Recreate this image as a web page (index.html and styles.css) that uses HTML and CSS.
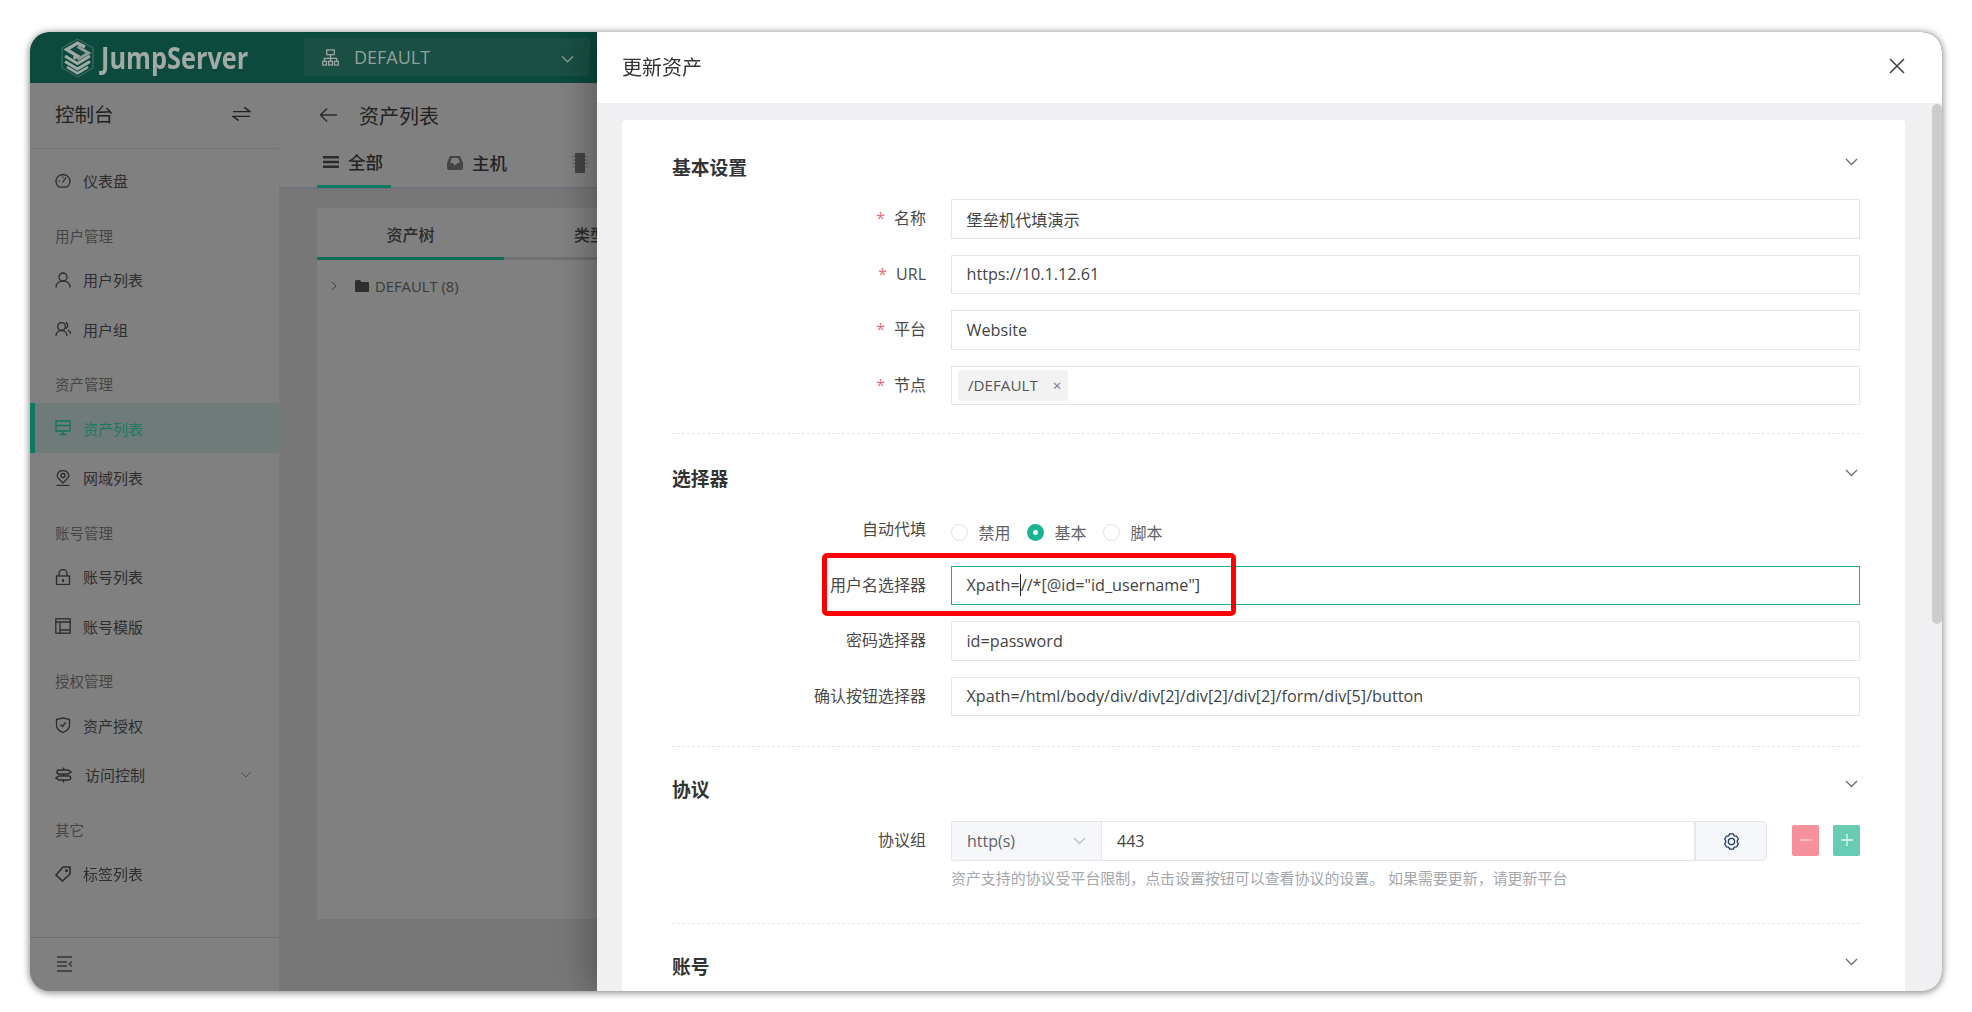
FILE: index.html
```html
<!DOCTYPE html>
<html lang="zh-CN">
<head>
<meta charset="utf-8">
<title>JumpServer 更新资产</title>
<link rel="stylesheet" href="styles.css">
</head>
<body>
<div class="window">
  <header class="topbar">
    <div class="logo">
      <svg class="logo-mark" viewBox="0 0 33 40" fill="none" stroke="#a2aaa6">
        <path d="M16.500 1 32 10v20L16.500 39 1 30V10z" stroke-width=".8" stroke="#5d7f76"/>
        <path d="M24 9 16.500 5 5.500 11.500 16.500 18l-4 2.300" stroke-width="3.200"/>
        <path d="M16.500 8.500l11 6.500-11 6.500" stroke-width="3" stroke="#a2aaa6" opacity=".85"/>
        <path d="M4 18l12.500 7.500L29 18" stroke-width="3"/>
        <path d="M4 23.500l12.500 7.500L29 23.500" stroke-width="3"/>
        <path d="M6 29l10.500 6.300L27 29" stroke-width="2.600"/>
      </svg>
      <span class="logo-text">JumpServer</span>
    </div>
    <div class="org">
      <svg class="org-icon" viewBox="0 0 18 18" fill="none" stroke="#a2aaa6" stroke-width="1.300">
        <rect x="5" y="1" width="8" height="5"/><path d="M9 6v4M2.500 13V10h13v3M9 10v3"/>
        <rect x=".8" y="13" width="4" height="4"/><rect x="7" y="13" width="4" height="4"/><rect x="13.200" y="13" width="4" height="4"/>
      </svg>
      <span class="org-name">DEFAULT</span>
      <svg class="org-chev" viewBox="0 0 14 8" fill="none" stroke="#8f9b97" stroke-width="1.300"><path d="M1 1l6 6 6-6"/></svg>
    </div>
  </header>
  <div class="app">
    <aside class="sidebar">
      <div class="side-head">
        <span class="side-title">控制台</span>
        <svg class="swap" viewBox="0 0 20 16" fill="none" stroke="#222" stroke-width="1.500"><path d="M1 5.500h18L13 1M19 10.500H1l6 4.500"/></svg>
      </div>
      <nav class="nav">
        <a class="item"><svg class="ico" viewBox="0 0 16 16" fill="none" stroke="#2c2c2c" stroke-width="1.300"><path d="M4.500 14.200a7 6.800 0 1 1 7 0z"/><path d="M7.500 9.500l3.500-5M3.500 8h1.200M8 3.500v1.200"/></svg>仪表盘</a>
        <div class="group">用户管理</div>
        <a class="item"><svg class="ico" viewBox="0 0 16 16" fill="none" stroke="#2c2c2c" stroke-width="1.300"><circle cx="8" cy="5" r="4"/><path d="M1 15.500c0-4 3-6.500 7-6.500s7 2.500 7 6.500"/></svg>用户列表</a>
        <a class="item"><svg class="ico" viewBox="0 0 16 16" fill="none" stroke="#2c2c2c" stroke-width="1.300"><circle cx="6.500" cy="5.500" r="3.800"/><path d="M1 15c0-3.500 2.500-5.500 5.500-5.500S12 11.500 12 15M10.500 1.500c2.500.5 3 4.500.5 6M13 9c1.500 1 2.500 2.500 2.500 4"/></svg>用户组</a>
        <div class="group">资产管理</div>
        <a class="item item-active"><svg class="ico" viewBox="0 0 16 16" fill="none" stroke="#11755f" stroke-width="1.300"><path d="M1 1h14v10H1zM1 5.500h14M8 11v3.500M4.500 14.500h7"/></svg>资产列表</a>
        <a class="item"><svg class="ico" viewBox="0 0 16 16" fill="none" stroke="#2c2c2c" stroke-width="1.300"><path d="M8 13C5 10 2.200 8 2.200 5.500a5.800 5 0 0 1 11.600 0C13.800 8 11 10 8 13z"/><circle cx="8" cy="5.500" r="2"/><path d="M1.500 15.500h13"/></svg>网域列表</a>
        <div class="group">账号管理</div>
        <a class="item"><svg class="ico" viewBox="0 0 16 16" fill="none" stroke="#2c2c2c" stroke-width="1.300"><rect x="1.500" y="7" width="13" height="8.500"/><path d="M4 7V4.500a4 4 0 0 1 8 0V7"/><path d="M8 10v3" stroke-width="1.800"/></svg>账号列表</a>
        <a class="item"><svg class="ico" viewBox="0 0 16 16" fill="none" stroke="#2c2c2c" stroke-width="1.300"><rect x=".8" y=".8" width="14.400" height="14.400"/><path d="M.8 4h14.400M5 4v11.200M5 12h10"/></svg>账号模版</a>
        <div class="group">授权管理</div>
        <a class="item"><svg class="ico" viewBox="0 0 16 16" fill="none" stroke="#2c2c2c" stroke-width="1.300"><path d="M1.500 2.500L8 .8l6.500 1.700v6c0 3.500-3 5.500-6.500 7-3.500-1.500-6.500-3.500-6.500-7z"/><path d="M5.500 7.500L7.500 9.500l3-4"/></svg>资产授权</a>
        <a class="item item-sub"><svg class="ico ico-sub" viewBox="0 0 17 16" fill="none" stroke="#2c2c2c" stroke-width="1.500"><path d="M8.500 .5V3M8.500 7v2M8.500 13v2.500M3 3h10l3 2-3 2H4a2 2 0 0 1 0-4zM14 9H4l-3 2 3 2h9.500a2 2 0 0 0 .5-4z"/></svg>访问控制<svg class="sub-chev" viewBox="0 0 12 7" fill="none" stroke="#4f4f4f" stroke-width="1"><path d="M1 1l5 5 5-5"/></svg></a>
        <div class="group">其它</div>
        <a class="item"><svg class="ico" viewBox="0 0 16 16" fill="none" stroke="#2c2c2c" stroke-width="1.600"><path d="M1 9l7-8h7v7l-7.500 7z"/><circle cx="11.500" cy="4.500" r=".8"/></svg>标签列表</a>
      </nav>
      <div class="side-foot">
        <svg class="collapse" viewBox="0 0 17 16" fill="none" stroke="#343438" stroke-width="1.300"><path d="M1 1h15M1 6h10M1 10h10M1 15h15M16 5.500l-3 2.500 3 2.500"/></svg>
      </div>
    </aside>
    <main class="main">
      <div class="page-head">
        <div class="page-title-row">
          <svg class="back" viewBox="0 0 18 16" fill="none" stroke="#2b2b2b" stroke-width="1.500"><path d="M18 8H1.500M8 1.500L1.500 8 8 14.500"/></svg>
          <h1 class="page-title">资产列表</h1>
        </div>
        <div class="tabs">
          <a class="tab tab-active"><svg class="tab-ico" viewBox="0 0 16 14" fill="#2b2b2b"><path d="M0 1h16v2.400H0zM0 5.800h16v2.400H0zM0 10.600h16V13H0z"/></svg>全部</a>
          <a class="tab tab-host"><svg class="tab-ico" viewBox="0 0 16 14" fill="#444"><path d="M3 0h10l3 7v5a2 2 0 0 1-2 2H2a2 2 0 0 1-2-2V7zM3 7h3l1 2h2l1-2h3l-1.800-5H4.800z"/></svg>主机</a>
          <a class="tab tab-chip"><svg class="tab-ico" viewBox="0 0 16 20" fill="#444"><rect x="3" y="0" width="10" height="20" rx="1"/><path d="M0 3h3v1H0zM0 6.500h3v1H0zM0 10h3v1H0zM0 13.500h3v1H0zM13 3h3v1h-3zM13 6.500h3v1h-3zM13 10h3v1h-3zM13 13.500h3v1h-3z" opacity=".6"/></svg></a>
        </div>
      </div>
      <section class="tree-card">
        <div class="tree-tabs">
          <span class="tree-tab tree-tab-active">资产树</span>
          <span class="tree-tab">类型</span>
        </div>
        <div class="tree-row">
          <svg class="tree-chev" viewBox="0 0 6 10" fill="none" stroke="#3a3a3a" stroke-width="1"><path d="M1 1l4 4-4 4"/></svg>
          <svg class="folder" viewBox="0 0 14 12" fill="#2e2e2e"><path d="M0 1.500A1.500 1.500 0 0 1 1.500 0h3.500l1.500 2H13a1 1 0 0 1 1 1v8a1 1 0 0 1-1 1H1a1 1 0 0 1-1-1z"/></svg>
          <span>DEFAULT (8)</span>
        </div>
      </section>
    </main>
  </div>

  <div class="drawer">
    <div class="drawer-head">
      <h2 class="drawer-title">更新资产</h2>
      <svg class="close" viewBox="0 0 16 16" fill="none" stroke="#444" stroke-width="1.600"><path d="M1 1l14 14M15 1L1 15"/></svg>
    </div>
    <div class="drawer-body">
      <div class="scrollbar"></div>
      <form class="card">
        <section class="sec sec-a">
          <div class="sec-head"><h3 class="sec-title">基本设置</h3><svg class="chev" viewBox="0 0 13 8" fill="none" stroke="#6d6d6d" stroke-width="1.300"><path d="M1 1l5.500 5.500L12 1"/></svg></div>
          <div class="fields">
            <label class="lbl req">名称</label><div class="input">堡垒机代填演示</div>
            <label class="lbl req">URL</label><div class="input">https://10.1.12.61</div>
            <label class="lbl req">平台</label><div class="input">Website</div>
            <label class="lbl req">节点</label><div class="input input-tags"><span class="tag">/DEFAULT<span class="tag-x">×</span></span></div>
          </div>
        </section>
        <section class="sec sec-b">
          <div class="sec-head"><h3 class="sec-title">选择器</h3><svg class="chev" viewBox="0 0 13 8" fill="none" stroke="#6d6d6d" stroke-width="1.300"><path d="M1 1l5.500 5.500L12 1"/></svg></div>
          <div class="fields">
            <label class="lbl">自动代填</label>
            <div class="radios">
              <span class="radio"></span><span class="radio-text">禁用</span>
              <span class="radio radio-on"></span><span class="radio-text">基本</span>
              <span class="radio"></span><span class="radio-text">脚本</span>
            </div>
            <label class="lbl">用户名选择器</label><div class="input input-focus">Xpath=<i class="caret"></i>//*[@id="id_username"]</div>
            <label class="lbl">密码选择器</label><div class="input">id=password</div>
            <label class="lbl">确认按钮选择器</label><div class="input">Xpath=/html/body/div/div[2]/div[2]/div[2]/form/div[5]/button</div>
          </div>
        </section>
        <section class="sec sec-c">
          <div class="sec-head"><h3 class="sec-title">协议</h3><svg class="chev" viewBox="0 0 13 8" fill="none" stroke="#6d6d6d" stroke-width="1.300"><path d="M1 1l5.500 5.500L12 1"/></svg></div>
          <div class="fields">
            <label class="lbl">协议组</label>
            <div class="proto">
              <div class="proto-group">
                <div class="proto-select">http(s)<svg class="proto-chev" viewBox="0 0 13 8" fill="none" stroke="#b4b8bf" stroke-width="1.100"><path d="M1 1l5.500 5.500L12 1"/></svg></div>
                <div class="proto-port">443</div>
                <div class="proto-gear"><svg class="gear" viewBox="0 0 18 18" fill="none" stroke="#1d3763" stroke-width="1.300"><path d="M7 1h4l1 2 2.300.2 2 3.300L15 8.500v1l1.300 2-2 3.300-2.300.2-1 2H7l-1-2-2.300-.2-2-3.300 1.300-2v-1l-1.300-2 2-3.300L6 3z"/><circle cx="9" cy="9" r="3.300"/></svg></div>
              </div>
              <span class="btn btn-minus"><svg class="btn-ico" viewBox="0 0 12 12" stroke="#fbd3d8" stroke-width="1.300"><path d="M0 6h12"/></svg></span>
              <span class="btn btn-plus"><svg class="btn-ico" viewBox="0 0 12 12" stroke="#e3f7f1" stroke-width="1.300"><path d="M0 6h12M6 0v12"/></svg></span>
            </div>
            <div class="help">资产支持的协议受平台限制，点击设置按钮可以查看协议的设置。 如果需要更新，请更新平台</div>
          </div>
        </section>
        <section class="sec sec-d">
          <div class="sec-head"><h3 class="sec-title">账号</h3><svg class="chev" viewBox="0 0 13 8" fill="none" stroke="#6d6d6d" stroke-width="1.300"><path d="M1 1l5.500 5.500L12 1"/></svg></div>
        </section>
      </form>
    </div>
    <div class="highlight"></div>
  </div>
</div>
</body>
</html>
```

FILE: styles.css
```css
* { box-sizing: border-box; }
html, body { margin: 0; height: 100%; background: #fff; overflow: hidden; }
body {
  font-family: "Open Sans", "Noto Sans CJK SC", sans-serif;
  padding: 32px 30px 21px;
  color: #333;
}
h1, h2, h3 { margin: 0; font-weight: 400; }

.window {
  position: relative;
  height: 959px;
  border-radius: 20px;
  overflow: hidden;
  display: flex;
  flex-direction: column;
  background: #808080;
}
body::before {
  content: "";
  position: fixed;
  left: 30px; top: 32px; width: 1912px; height: 959px;
  border-radius: 20px;
  box-shadow: 0 1px 7px 1px rgba(0,0,0,.45);
}

.topbar {
  height: 51px;
  flex: none;
  background: #0b4a3c;
  display: flex;
  align-items: center;
  padding-left: 31px;
  gap: 26px;
}
.logo { display: flex; align-items: center; gap: 7px; width: 217px; }
.logo-mark { width: 33px; height: 40px; flex: none; }
.logo-text {
  font-family: "Open Sans", sans-serif;
  font-weight: 700;
  font-size: 30px;
  color: #a2aaa6;
  line-height: 40px;
  transform: scaleX(.845);
  transform-origin: left center;
}
.org {
  width: 286px;
  height: 38px;
  margin-top: -1px;
  background: #1a4f43;
  border-radius: 3px;
  display: flex;
  align-items: center;
  padding-left: 18px;
  color: #95a09c;
  font-size: 18px;
}
.org-icon { width: 17px; height: 17px; margin-right: 15px; }
.org-name { flex: 1; }
.org-chev { width: 13px; height: 8px; margin: 4px 16px 0 0; }

.app { flex: 1; display: flex; min-height: 0; }
.sidebar {
  width: 249px;
  flex: none;
  display: flex;
  flex-direction: column;
  background: #808080;
}
.side-head {
  height: 66px;
  flex: none;
  border-bottom: 1px solid #767676;
  display: flex;
  align-items: center;
  justify-content: space-between;
  padding: 0 28px 4px 25px;
}
.side-title { font-size: 19.500px; color: #222; }
.swap { width: 19px; height: 16px; }
.nav { flex: 1; padding-top: 7px; }
.item {
  height: 49.600px;
  display: flex;
  align-items: center;
  padding-left: 25px;
  font-size: 15px;
  color: #2e2e2e;
}
.ico { width: 16px; height: 16px; margin-right: 12px; flex: none; }
.ico-sub { width: 17px; margin-right: 13px; }
.item-sub { position: relative; }
.sub-chev { width: 12px; height: 7px; margin-left: auto; margin-right: 27px; }
.item-active {
  background: #6f7b78;
  border-left: 5px solid #0e7a62;
  padding-left: 20px;
  color: #1a7a64;
}
.group {
  height: 39.300px;
  margin-top: 10px;
  padding: 11px 0 0 25px;
  font-size: 14.500px;
  line-height: 20px;
  color: #454545;
}
.side-foot {
  height: 54px;
  flex: none;
  border-top: 1px solid #6e6e6e;
  display: flex;
  align-items: center;
  padding: 0 0 2px 26px;
}
.collapse { width: 17px; height: 16px; }

.main {
  flex: 1;
  min-width: 0;
  display: flex;
  flex-direction: column;
  background: #777;
}
.page-head {
  flex: none;
  background: #808080;
  border-bottom: 2px solid #71737a;
  padding-left: 38px;
}
.page-title-row {
  height: 65px;
  display: flex;
  align-items: center;
  gap: 22px;
  padding: 0 0 1px 2px;
}
.back { width: 18px; height: 16px; }
.page-title { font-size: 20px; color: #222; }
.tabs { display: flex; height: 39px; }
.tab {
  height: 40px;
  display: flex;
  align-items: center;
  font-size: 17.500px;
  color: #222;
  font-weight: 500;
  margin-bottom: -1px;
}
.tab-active { border-bottom: 3px solid #0f7a63; width: 74px; padding: 0 8px 10px 6px; }
.tab-host { margin-left: 56px; width: 125px; padding-bottom: 11px; }
.tab-chip { padding-bottom: 11px; }
.tab-ico { width: 16px; height: 14px; margin-right: 9px; flex: none; }
.tab-chip .tab-ico { height: 20px; }

.tree-card {
  flex: 1;
  margin: 19px 0 72px 38px;
  background: #808080;
}
.tree-tabs { display: flex; height: 52px; border-bottom: 3px solid #6f7070; }
.tree-tab {
  width: 172px;
  text-align: center;
  font-size: 16px;
  line-height: 54px;
  color: #2b2b2b;
  font-weight: 500;
  white-space: nowrap;
}
.tree-tab-active {
  width: 187px;
  height: 52px;
  border-bottom: 3px solid #0f6b56;
}
.tree-row {
  display: flex;
  align-items: center;
  height: 24px;
  margin-top: 14px;
  padding-left: 14px;
  font-size: 14.800px;
  color: #3a3a3a;
}
.tree-chev { width: 6px; height: 10px; margin-right: 18px; }
.folder { width: 14px; height: 12px; margin-right: 6px; }

.drawer {
  position: absolute;
  left: 567px;
  top: 0;
  bottom: 0;
  right: 0;
  display: flex;
  flex-direction: column;
  background: #fff;
  box-shadow: -8px 0 30px rgba(0,0,0,.28);
}
.drawer-head {
  height: 71px;
  flex: none;
  display: flex;
  align-items: center;
  justify-content: space-between;
  padding: 0 37px 3px 25px;
}
.drawer-title { font-size: 20px; color: #333; }
.close { width: 16px; height: 16px; }

.drawer-body {
  position: relative;
  flex: 1;
  min-height: 0;
  overflow: hidden;
  background: #f0f0f2;
  padding: 17px 37px 0 25px;
}
.scrollbar {
  position: absolute;
  right: 0;
  top: 1px;
  width: 10px;
  height: 520px;
  background: #ccc;
  border-radius: 5px;
}
.card {
  background: #fff;
  border-radius: 4px;
  padding: 35px 45px 60px 50px;
  height: 960px;
}
.sec-head {
  height: 24px;
  display: flex;
  align-items: center;
  justify-content: space-between;
  margin-bottom: 20px;
}
.sec-title { font-size: 18.800px; font-weight: 700; color: #333; margin-bottom: 1px; }
.chev { width: 13px; height: 8px; margin: -10px 2px 0 0; }

.sec { border-bottom: 1px dashed #e7e7e9; }
.sec-a { padding-bottom: 28px; }
.sec-b { padding-top: 32px; padding-bottom: 30px; }
.sec-c { padding-top: 30px; padding-bottom: 6px; }
.sec-c .sec-head { margin-bottom: 20px; }
.sec-d { padding-top: 31px; border-bottom: 0; }

.fields {
  display: grid;
  grid-template-columns: 254px 1fr;
  column-gap: 25px;
  row-gap: 16px;
  grid-auto-rows: minmax(39.500px, auto);
}
.lbl {
  text-align: right;
  font-size: 16px;
  line-height: 39.500px;
  color: #4a4a4a;
}
.req::before {
  content: "*";
  color: #ec6a78;
  margin-right: 9px;
}
.input {
  height: 39.500px;
  border: 1px solid #e5e6e7;
  padding: 0 14.500px;
  display: flex;
  align-items: center;
  font-size: 16.200px;
  color: #444;
  white-space: pre;
}
.input-focus { border-color: #1ab394; position: relative; }
.caret {
  display: inline-block;
  width: 0;
  height: 22px;
  border-left: 1px solid #222;
}
.input-tags { padding: 0 6px; }
.tag {
  height: 31px;
  background: #f2f2f3;
  border-radius: 4px;
  padding: 0 7px 0 10px;
  display: inline-flex;
  align-items: center;
  font-size: 15.200px;
  color: #555;
}
.tag-x { margin-left: 15px; font-size: 15px; color: #777; }

.radios { display: flex; align-items: center; height: 39.500px; padding-top: 5px; }
.radio {
  width: 17px;
  height: 17px;
  border: 1px solid #dfe0e4;
  border-radius: 50%;
  background: #fff;
  margin-right: 10.500px;
}
.radio-on { background: #1ab394; border: 0; position: relative; }
.radio-on::after {
  content: "";
  position: absolute;
  left: 6px; top: 6px;
  width: 5px; height: 5px;
  border-radius: 50%;
  background: #fff;
}
.radio-text { font-size: 16px; color: #606266; margin-right: 16.500px; }

.proto { display: flex; align-items: center; height: 40px; }
.proto-group { display: flex; flex: none; width: 816px; height: 40px; }
.proto-select {
  width: 151px;
  flex: none;
  border: 1px solid #e5e6ea;
  background: #f5f7fa;
  display: flex;
  align-items: center;
  justify-content: space-between;
  padding: 0 15px;
  font-size: 16px;
  color: #606266;
}
.proto-chev { width: 13px; height: 8px; }
.proto-port {
  flex: 1;
  border: 1px solid #e5e6ea;
  border-left: 0;
  display: flex;
  align-items: center;
  padding-left: 15px;
  font-size: 16px;
  color: #444;
}
.proto-gear {
  width: 72px;
  flex: none;
  border: 1px solid #e5e6ea;
  border-radius: 0 5px 5px 0;
  background: #f5f7fa;
  display: flex;
  align-items: center;
  justify-content: center;
}
.gear { width: 17px; height: 17px; }
.btn {
  width: 27px;
  height: 31px;
  margin-top: -2px;
  border-radius: 2px;
  display: flex;
  align-items: center;
  justify-content: center;
  margin-left: 25px;
}
.btn + .btn { margin-left: 14px; }
.btn-minus { background: #f6919c; }
.btn-plus { background: #68ccb5; }
.btn-ico { width: 12px; height: 12px; }
.help {
  grid-column: 2;
  margin-top: -16px;
  padding-top: 6px;
  font-size: 14.950px;
  line-height: 22px;
  color: #a4a7ac;
}
.highlight {
  position: absolute;
  left: 225px;
  top: 521px;
  width: 414px;
  height: 63px;
  border: 5px solid #f00;
  border-radius: 5px;
}
```
